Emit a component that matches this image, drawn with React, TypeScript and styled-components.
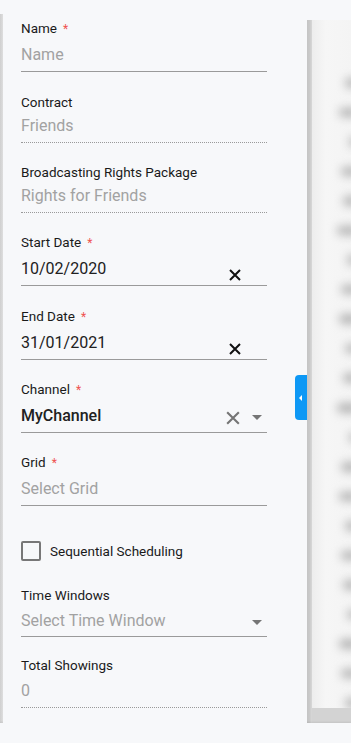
import styled, { createGlobalStyle } from "styled-components";

const GlobalStyle = createGlobalStyle`
  html, body {
    margin: 0;
    padding: 0;
    background: #f7f8fa;
    font-family: Roboto, "Liberation Sans", Arial, sans-serif;
    overflow: hidden;
  }
  * { box-sizing: border-box; }
`;

/* ============== Layout ============== */

const Screen = styled.div`
  width: 351px;
  height: 743px;
  display: flex;
  flex-direction: column;
  background: #f7f8fa;
`;

const Main = styled.div`
  height: 723px;
  display: flex;
  align-items: stretch;
`;

const LeftEdge = styled.div`
  width: 3px;
  margin-top: 14px;
  background: linear-gradient(90deg, #cfcfcf, #dedede);
`;

const Panel = styled.div`
  position: relative;
  width: 304px;
  padding: 0 40px 0 18px;
  background: #f7f8fa;
`;

const Behind = styled.div`
  flex: 1;
  margin-top: 20px;
  display: flex;
`;

const ScrollStrip = styled.div`
  width: 5px;
  background: linear-gradient(90deg, #c4c4c4 0%, #c9c9c9 50%, #d8d8d8 100%);
`;

const BehindPage = styled.div`
  flex: 1;
  display: flex;
  flex-direction: column;
  overflow: hidden;
`;

const BehindContent = styled.div`
  flex: 1;
  background: linear-gradient(90deg, #ededed 0%, #f6f6f6 35%, #f4f4f4 100%);
  display: flex;
  flex-direction: column;
  align-items: flex-end;
  gap: 20px;
  padding-top: 58px;
  overflow: hidden;
`;

const Smudge = styled.div<{ $w: number }>`
  width: ${({ $w }) => $w}px;
  height: 12px;
  border-radius: 6px;
  background: #b4b4b4;
  filter: blur(5px);
  margin-right: -8px;
`;

const BehindBottom = styled.div`
  height: 15px;
  background: #d3d3d3;
`;

const Footer = styled.div`
  flex: 1;
  background: #f7f8fa;
  box-shadow: 0 -1px 2px rgba(0, 0, 0, 0.08);
`;

/* ============== Fields ============== */

const Field = styled.div<{ $readOnly?: boolean; $top?: number; $pad?: number }>`
  margin-top: ${({ $top }) => $top ?? 20}px;
  padding-bottom: ${({ $pad }) => $pad ?? 5}px;
  border-bottom: 1px ${({ $readOnly }) => ($readOnly ? "dotted" : "solid")} #9a9a9a;
`;

const Label = styled.div`
  height: 16px;
  padding-top: 1px;
  line-height: 16px;
  font-size: 13.5px;
  color: #1a1a1a;
  display: flex;
  align-items: center;
`;

const Required = styled.span`
  color: #ef5350;
  font-size: 12px;
  margin-left: 6px;
  position: relative;
  top: 1px;
`;

const ValueRow = styled.div<{ $gap?: number }>`
  margin-top: ${({ $gap }) => $gap ?? 7}px;
  padding-top: 1px;
  height: 24px;
  display: flex;
  align-items: center;
  gap: 10px;
`;

const Value = styled.div<{ $tone: "dark" | "muted"; $bold?: boolean }>`
  flex: 1;
  font-size: 16px;
  line-height: 24px;
  color: ${({ $tone }) => ($tone === "dark" ? "#212121" : "#a2a2a2")};
  font-weight: ${({ $bold }) => ($bold ? 500 : 400)};
  white-space: nowrap;
`;

const IconSlot = styled.div<{ $shift?: number; $right?: number }>`
  display: flex;
  align-items: center;
  margin-right: ${({ $right }) => $right ?? 0}px;
  transform: translateY(${({ $shift }) => $shift ?? 0}px);
`;

const Caret = styled.div`
  width: 0;
  height: 0;
  border-left: 5px solid transparent;
  border-right: 5px solid transparent;
  border-top: 5px solid #757575;
  margin-right: 5px;
  margin-left: 2px;
  transform: translateY(2px);
`;

const CheckRow = styled.div`
  margin-top: 35px;
  display: flex;
  align-items: center;
  gap: 9px;
  font-size: 13.5px;
  color: #1a1a1a;
`;

const CheckBox = styled.div`
  width: 20px;
  height: 20px;
  border: 2px solid #777777;
  border-radius: 2px;
`;

const Tab = styled.div`
  position: absolute;
  right: 0;
  top: 375px;
  width: 12px;
  height: 45px;
  background: #0d98f5;
  border-radius: 4px 0 0 4px;
  display: flex;
  align-items: center;
  justify-content: center;

  &::after {
    content: "";
    width: 0;
    height: 0;
    border-top: 3px solid transparent;
    border-bottom: 3px solid transparent;
    border-right: 3px solid #ffffff;
    transform: translateX(-1px);
  }
`;

/* ============== Icons ============== */

const CloseIcon = ({ size, color, stroke }: { size: number; color: string; stroke: number }) => (
  <svg width={size} height={size} viewBox="0 0 12 12">
    <path d="M1 1 L11 11 M11 1 L1 11" stroke={color} strokeWidth={stroke} />
  </svg>
);

/* ============== Page ============== */

type FieldDef = {
  label: string;
  value: string;
  required?: boolean;
  readOnly?: boolean;
  top?: number;
};

const smudges = [14, 20, 10, 18, 16, 22, 12, 18, 20, 14, 16, 22, 10, 18, 20, 14, 18, 16, 12, 20, 18, 14];

export default function App() {
  const top: FieldDef[] = [
    { label: "Name", value: "Name", required: true, top: 19 },
    { label: "Contract", value: "Friends", readOnly: true, top: 21 },
    { label: "Broadcasting Rights Package", value: "Rights for Friends", readOnly: true },
  ];

  return (
    <Screen>
      <GlobalStyle />
      <Main>
        <LeftEdge />
        <Panel>
          {top.map((f) => (
            <Field key={f.label} $readOnly={f.readOnly} $top={f.top}>
              <Label>
                {f.label}
                {f.required ? <Required>*</Required> : null}
              </Label>
              <ValueRow $gap={f.readOnly ? 4 : 7}>
                <Value $tone="muted">{f.value}</Value>
              </ValueRow>
            </Field>
          ))}

          <Field>
            <Label>
              Start Date<Required>*</Required>
            </Label>
            <ValueRow>
              <Value $tone="dark">10/02/2020</Value>
              <IconSlot $shift={6} $right={26}>
                <CloseIcon size={12} color="#111" stroke={2} />
              </IconSlot>
            </ValueRow>
          </Field>

          <Field $top={21}>
            <Label>
              End Date<Required>*</Required>
            </Label>
            <ValueRow>
              <Value $tone="dark">31/01/2021</Value>
              <IconSlot $shift={6} $right={26}>
                <CloseIcon size={12} color="#111" stroke={2} />
              </IconSlot>
            </ValueRow>
          </Field>

          <Field>
            <Label>
              Channel<Required>*</Required>
            </Label>
            <ValueRow>
              <Value $tone="dark" $bold>
                MyChannel
              </Value>
              <IconSlot $shift={2}>
                <CloseIcon size={14} color="#757575" stroke={1.8} />
              </IconSlot>
              <Caret />
            </ValueRow>
          </Field>

          <Field>
            <Label>
              Grid<Required>*</Required>
            </Label>
            <ValueRow>
              <Value $tone="muted">Select Grid</Value>
            </ValueRow>
          </Field>

          <CheckRow>
            <CheckBox />
            Sequential Scheduling
          </CheckRow>

          <Field $top={25} $pad={4}>
            <Label>Time Windows</Label>
            <ValueRow $gap={6}>
              <Value $tone="muted">Select Time Window</Value>
              <Caret />
            </ValueRow>
          </Field>

          <Field $readOnly $top={19}>
            <Label>Total Showings</Label>
            <ValueRow $gap={6}>
              <Value $tone="muted">0</Value>
            </ValueRow>
          </Field>

          <Tab />
        </Panel>
        <Behind>
          <ScrollStrip />
          <BehindPage>
            <BehindContent>
              {smudges.map((w, i) => (
                <Smudge key={i} $w={w} />
              ))}
            </BehindContent>
            <BehindBottom />
          </BehindPage>
        </Behind>
      </Main>
      <Footer />
    </Screen>
  );
}
